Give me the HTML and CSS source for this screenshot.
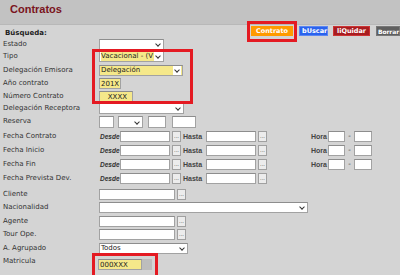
FILE: index.html
```html
<!DOCTYPE html>
<html lang="es">
<head>
    <meta charset="UTF-8">
    <title>Contratos</title>
    <link rel="stylesheet" href="styles.css">
</head>
<body>
    <div class="header">
        <h1>Contratos</h1>
    </div>

    <div class="toolbar">
        <span class="section">Búsqueda:</span>
        <div class="buttons">
            <span class="mark mark-btn"><button class="btn btn-orange">Contrato</button></span>
            <button class="btn btn-blue">bUscar</button>
            <button class="btn btn-red">liQuidar</button>
            <button class="btn btn-gray">Borrar</button>
        </div>
    </div>

    <div class="form">
        <div class="mark mark-top"></div>

        <div class="row h12">
            <label>Estado</label>
            <div class="sel w65"><span></span><i class="arrow"></i></div>
        </div>
        <div class="row h14">
            <label>Tipo</label>
            <div class="sel w65"><span class="hl">Vacacional - (V</span><i class="arrow"></i></div>
        </div>
        <div class="row h13">
            <label>Delegación Emisora</label>
            <div class="sel w84 yellow"><span>Delegación</span><i class="arrow"></i></div>
        </div>
        <div class="row h13">
            <label>Año contrato</label>
            <input class="inp yellow w22" value="201X">
        </div>
        <div class="row h12">
            <label>Número Contrato</label>
            <input class="inp yellow w34 right" value="XXXX">
        </div>
        <div class="row h13">
            <label>Delegación Receptora</label>
            <div class="sel w85"><span></span><i class="arrow"></i></div>
        </div>
        <div class="row h15">
            <label>Reserva</label>
            <input class="inp tall w15">
            <div class="sel tall w25 ml4"><span></span><i class="arrow"></i></div>
            <input class="inp tall w18 ml5">
            <input class="inp tall w24 ml6">
        </div>

        <div class="row h14">
            <label>Fecha Contrato</label>
            <em>Desde</em><input class="inp w50"><button class="dots">...</button>
            <span class="hasta">Hasta</span><input class="inp w50"><button class="dots">...</button>
            <span class="hora">Hora</span><input class="inp w17"><span class="dash">-</span><input class="inp w18">
        </div>
        <div class="row h14">
            <label>Fecha Inicio</label>
            <em>Desde</em><input class="inp w50"><button class="dots">...</button>
            <span class="hasta">Hasta</span><input class="inp w50"><button class="dots">...</button>
            <span class="hora">Hora</span><input class="inp w17"><span class="dash">-</span><input class="inp w18">
        </div>
        <div class="row h14">
            <label>Fecha Fin</label>
            <em>Desde</em><input class="inp w50"><button class="dots">...</button>
            <span class="hasta">Hasta</span><input class="inp w50"><button class="dots">...</button>
            <span class="hora">Hora</span><input class="inp w17"><span class="dash">-</span><input class="inp w18">
        </div>
        <div class="row h16">
            <label>Fecha Prevista Dev.</label>
            <em>Desde</em><input class="inp w50"><button class="dots">...</button>
            <span class="hasta">Hasta</span><input class="inp w50"><button class="dots">...</button>
        </div>

        <div class="row h13">
            <label>Cliente</label>
            <input class="inp w76"><button class="dots">...</button>
        </div>
        <div class="row h14">
            <label>Nacionalidad</label>
            <div class="sel w209"><span></span><i class="arrow"></i></div>
        </div>
        <div class="row h13">
            <label>Agente</label>
            <input class="inp w76"><button class="dots">...</button>
        </div>
        <div class="row h14">
            <label>Tour Ope.</label>
            <input class="inp w76"><button class="dots">...</button>
        </div>
        <div class="row h13">
            <label>A. Agrupado</label>
            <div class="sel w89"><span>Todos</span><i class="arrow"></i></div>
        </div>
        <div class="row h14">
            <label>Matricula</label>
            <span class="mark mark-matr"><input class="inp yellow w44" value="000XXX"><span class="gap"></span></span>
        </div>
    </div>
</body>
</html>
```

FILE: styles.css
```css
* {
    margin: 0;
    padding: 0;
    box-sizing: border-box;
}

body {
    font-family: "DejaVu Sans", Verdana, sans-serif;
    font-size: 7px;
    color: #333;
    background-color: #d4d4d4;
    width: 400px;
    height: 275px;
    overflow: hidden;
}

.header {
    height: 25px;
    background-color: #c2c2c2;
    border-bottom: 1px solid #b8b8b8;
    padding: 3px 0 0 10px;
}

h1 {
    font-family: "Liberation Sans", Arial, sans-serif;
    font-size: 11px;
    font-weight: bold;
    color: #7a1420;
    line-height: 12px;
}

.toolbar {
    display: flex;
    align-items: flex-start;
    height: 14px;
    padding-left: 5px;
}

.section {
    font-weight: bold;
    color: #222;
    margin-top: 4px;
}

.buttons {
    display: flex;
    align-items: flex-start;
    margin-left: auto;
    margin-top: 1px;
}

.btn {
    height: 10px;
    border: none;
    color: white;
    font-family: "DejaVu Sans", Verdana, sans-serif;
    font-size: 6.5px;
    font-weight: bold;
    padding: 0 2px;
    line-height: 9px;
    flex-shrink: 0;
}

.btn-orange { background-color: #ff9a00; width: 42px; }
.btn-blue { background-color: #2a63ee; border: 1px solid #5b86f0; width: 29px; margin-left: 2px; }
.btn-red { background-color: #a81c20; border: 1px solid #c33; width: 37px; margin-left: 5px; }
.btn-gray {
    background-color: #5f5f5f;
    border: 1px solid #777;
    width: 24px;
    margin-left: 6px;
    padding: 0 0 0 1px;
    text-align: left;
    font-size: 6px;
    letter-spacing: -0.1px;
}

.mark {
    border: 3px solid #e41a22;
}

.mark-btn {
    display: block;
    padding: 2px 1px;
    margin-top: -5px;
    height: 21px;
    flex-shrink: 0;
}

.form {
    position: relative;
    padding-left: 3px;
}

.mark-top {
    position: absolute;
    left: 92px;
    top: 10px;
    width: 101px;
    height: 55px;
    pointer-events: none;
}

.row {
    display: flex;
    align-items: flex-start;
}

.h12 { height: 12px; }
.h13 { height: 13px; }
.h14 { height: 14px; }
.h15 { height: 15px; }
.h16 { height: 16px; }

label {
    width: 96px;
    flex-shrink: 0;
    line-height: 11px;
    color: #333;
}

.inp,
.sel {
    height: 11px;
    border: 1px solid #a2a2a2;
    border-top-color: #8d8d8d;
    background-color: white;
    font-family: "DejaVu Sans", Verdana, sans-serif;
    font-size: 7px;
    color: #222;
    padding: 0 1px;
    outline: none;
}

.inp.tall,
.sel.tall {
    height: 12px;
}

.yellow {
    background-color: #f5e88a;
}

.right {
    text-align: right;
    padding-right: 5px;
}

.sel {
    display: flex;
    align-items: center;
    justify-content: space-between;
    line-height: 9px;
}

.sel .hl {
    background-color: #f5e88a;
    padding-right: 1px;
}

.arrow {
    width: 8px;
    height: 9px;
    background-color: white;
    position: relative;
    flex-shrink: 0;
}

.arrow::after {
    content: "";
    position: absolute;
    left: 2px;
    top: 2px;
    width: 3px;
    height: 3px;
    border-right: 1px solid #333;
    border-bottom: 1px solid #333;
    transform: rotate(45deg);
}

.w15 { width: 15px; }
.w17 { width: 17px; }
.w18 { width: 18px; }
.w22 { width: 22px; }
.w24 { width: 24px; }
.w25 { width: 25px; }
.w34 { width: 34px; }
.w44 { width: 44px; }
.w50 { width: 50px; }
.w65 { width: 65px; }
.w76 { width: 76px; }
.w84 { width: 84px; }
.w85 { width: 85px; }
.w89 { width: 89px; }
.w209 { width: 209px; }

.ml4 { margin-left: 4px; }
.ml5 { margin-left: 5px; }
.ml6 { margin-left: 6px; }

em {
    width: 21px;
    flex-shrink: 0;
    font-family: "Liberation Sans", Arial, sans-serif;
    font-size: 6.5px;
    font-style: italic;
    font-weight: bold;
    color: #333;
    line-height: 11px;
    padding-left: 1px;
}

.hasta {
    width: 23px;
    flex-shrink: 0;
    margin-left: 2px;
    font-family: "Liberation Sans", Arial, sans-serif;
    font-weight: bold;
    color: #444;
    line-height: 11px;
}

.dots {
    width: 9px;
    height: 11px;
    margin-left: 2px;
    border: 1px solid #a0a0a0;
    background-color: #ececec;
    font-size: 6px;
    line-height: 7px;
    color: #333;
    flex-shrink: 0;
}

.hora {
    margin-left: 44px;
    width: 17px;
    flex-shrink: 0;
    font-family: "Liberation Sans", Arial, sans-serif;
    font-weight: bold;
    color: #444;
    line-height: 11px;
}

.dash {
    width: 9px;
    text-align: center;
    line-height: 11px;
}

.mark-matr {
    display: flex;
    margin: -3px 0 0 -7px;
    padding: 3px 3px 0 3px;
    height: 25px;
    width: 66px;
}

.mark-matr .gap {
    width: 13px;
    height: 11px;
    background-color: #bdbdbd;
}
```
